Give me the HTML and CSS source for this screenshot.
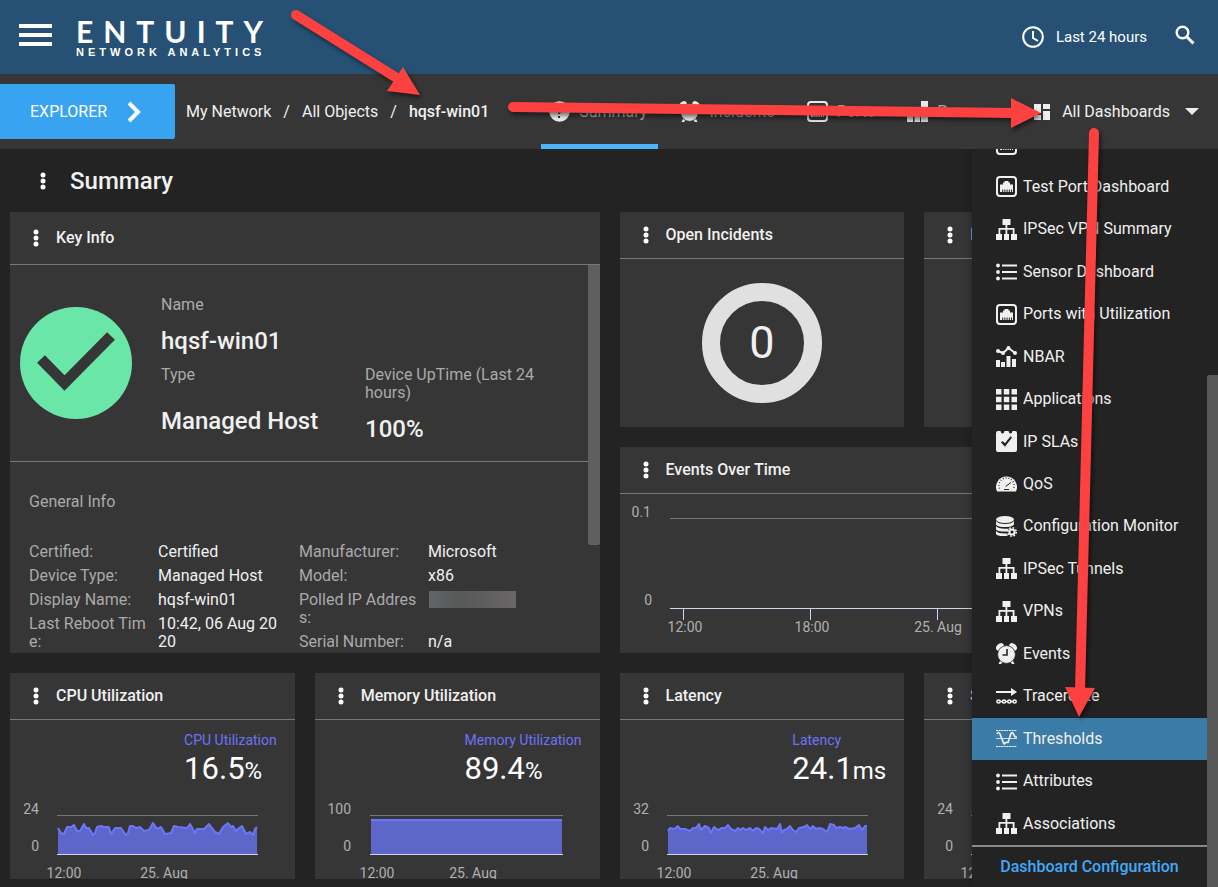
FILE: index.html
```html
<!DOCTYPE html>
<html lang="en">

<head>
    <meta charset="UTF-8">
    <meta name="viewport" content="width=device-width, initial-scale=1">
    <title>hqsf-win01 - Summary</title>
    <link rel="stylesheet" href="styles.css">
</head>

<body>
    <!-- icon sprite -->
    <svg class="sprite" aria-hidden="true">
        <symbol id="kebab" viewBox="0 0 6 18">
            <circle cx="3" cy="3" r="2.500" />
            <circle cx="3" cy="9" r="2.500" />
            <circle cx="3" cy="15" r="2.500" />
        </symbol>
        <symbol id="port" viewBox="0 0 21 21">
            <rect x="1" y="1" width="19" height="19" rx="3" fill="none" stroke="currentColor" stroke-width="2" />
            <path d="M4 16V8.500h3V6.500h1.500V5h4v1.500H14v2h3V16h-1v-2.500h-1V16h-1.200v-2.500h-1V16h-1.200v-2.500h-1V16H9.400v-2.500h-1V16H7.200v-2.500h-1V16z" />
        </symbol>
        <symbol id="tree" viewBox="0 0 21 21">
            <path d="M6.500 0h8v6h-3.200v3h7.200v6H21v6h-6v-6h1.700v-4.200h-5.400V15h1.700v6H8v-6h1.500v-4.200H4.300V15H6v6H0v-6h2.500V9h7V6h-3z" />
        </symbol>
        <symbol id="list" viewBox="0 0 21 21">
            <path d="M6 3.500h15v2H6zM6 10h15v2H6zM6 16.500h15v2H6z" />
            <circle cx="2" cy="4.500" r="1.900" />
            <circle cx="2" cy="11" r="1.900" />
            <circle cx="2" cy="17.500" r="1.900" />
        </symbol>
        <symbol id="nbar" viewBox="0 0 21 21">
            <path d="M0 14h4v7H0zM5 16h4v5H5zM10.500 10h4v11h-4zM16 13h4v8h-4z" />
            <path d="M2 5l5 2 5.500-5L19 7" fill="none" stroke="currentColor" stroke-width="2" />
            <circle cx="2" cy="5" r="2" />
            <circle cx="7" cy="7" r="2" />
            <circle cx="12.500" cy="2" r="2" />
            <circle cx="19" cy="7" r="2" />
        </symbol>
        <symbol id="apps" viewBox="0 0 21 21">
            <path d="M0 0h5.500v5.500H0zM7.800 0h5.500v5.500H7.800zM15.500 0H21v5.500h-5.500zM0 7.800h5.500v5.500H0zM7.800 7.800h5.500v5.500H7.800zM15.500 7.800H21v5.500h-5.500zM0 15.500h5.500V21H0zM7.800 15.500h5.500V21H7.800zM15.500 15.500H21V21h-5.500z" />
        </symbol>
        <symbol id="sla" viewBox="0 0 21 21">
            <path fill-rule="evenodd" d="M2 0h2.500q.5 2.600 2 2.600T8.500 0h4q.5 2.600 2 2.600T16.500 0H19q2 0 2 2v17q0 2-2 2H2q-2 0-2-2V2q0-2 2-2zM5 11.500l4 4.200L16 6.500 14.500 5.200 9 12.300 6.500 9.900z" />
        </symbol>
        <symbol id="gauge" viewBox="0 0 21 21">
            <path d="M1 18.500A10.500 10.500 0 1 1 20 18.500z" />
            <g fill="none" stroke="#232323">
                <path d="M3.500 15.500a7.600 7.600 0 1 1 14 0" stroke-width="1.400" stroke-dasharray=".8 2" />
                <path d="M9.500 13.500l5.500-4M8 16.500h5" stroke-width="1" />
            </g>
        </symbol>
        <symbol id="database" viewBox="0 0 21 21">
            <ellipse cx="9" cy="3.500" rx="9" ry="3.500" />
            <path d="M0 5q2 3 9 3t9-3v3.500q-2 2.600-9 2.600T0 8.500zM0 10q2 2.800 9 2.800 3.500 0 5-.5-2 1-2.500 3.200Q2 16 0 13.500zM0 15q2 2.500 9 2.500h2q.3 1.500 1 2.200Q2 21 0 18z" />
            <circle cx="16" cy="16" r="2.600" fill="none" stroke="currentColor" stroke-width="2" />
            <circle cx="16" cy="16" r="4.200" fill="none" stroke="currentColor" stroke-width="1.600" stroke-dasharray="1.700 1.600" />
        </symbol>
        <symbol id="alarm" viewBox="0 0 21 21">
            <ellipse cx="4" cy="4" rx="4.300" ry="3.200" transform="rotate(-42 4 4)" />
            <ellipse cx="17" cy="4" rx="4.300" ry="3.200" transform="rotate(42 17 4)" />
            <path d="M4.500 17l2.500 2-2 2H2.500zM16.500 17L14 19l2 2h2.500z" />
            <circle cx="10.500" cy="11.500" r="8.900" stroke="#232323" stroke-width=".8" />
            <path d="M11 6v6H6.500" fill="none" stroke="#232323" stroke-width="1.600" />
        </symbol>
        <symbol id="trace" viewBox="0 0 21 21">
            <path d="M0 5h15V2l6 4-6 4V7H0z" />
            <g fill="none" stroke="currentColor" stroke-width="1.600">
                <path d="M4 15.500h2M10 15.500h2M15 15.500h2" />
                <ellipse cx="2.500" cy="15.500" rx="1.600" ry="1.500" />
                <ellipse cx="8" cy="15.500" rx="1.600" ry="1.500" />
                <ellipse cx="13.300" cy="15.500" rx="1.600" ry="1.500" />
                <ellipse cx="18.600" cy="15.500" rx="1.600" ry="1.500" />
            </g>
        </symbol>
        <symbol id="threshold" viewBox="0 0 21 21">
            <g fill="none" stroke="currentColor">
                <path d="M0 2.500h21M0 18.500h21" stroke-dasharray="2 .6" />
                <path d="M0 10.500h21" stroke-width=".8" />
                <path d="M1 6q1.500-3 3 0l3.500 9q1 2 2-.5h2.500L15 5.500q1.500-2 2.500.5l1.500 3H21" stroke-width="1.700" />
            </g>
        </symbol>
        <symbol id="info" viewBox="0 0 21 21">
            <circle cx="10.500" cy="10.500" r="10.300" />
            <path d="M7.500 7q0-2.500 3-2.500t3 2.500q0 1.500-1.800 3t-1.700 3M9 16h2" fill="none" stroke="#363636" stroke-width="2" />
        </symbol>
        <symbol id="process" viewBox="0 0 21 21">
            <path d="M14 0h7v9h-7zM0 12h6v9H0zM7.500 9H13v12H7.500zM14 11h7v10h-7z" />
        </symbol>
    </svg>

    <header class="topbar">
        <button class="iconButton menuButton" aria-label="Menu">
            <svg width="34" height="24">
                <path d="M0 3h33M0 12h33M0 21h33" stroke="#fff" stroke-width="4" />
            </svg>
        </button>
        <a class="logo" href="#">
            <span class="logoName">ENTUITY</span>
            <span class="logoTag">NETWORK ANALYTICS</span>
        </a>
        <button class="timeButton">
            <svg width="22" height="22" fill="none" stroke="#fff" stroke-width="2">
                <circle cx="11" cy="11" r="9.800" />
                <path d="M11 5v7l5 3" />
            </svg>
            Last 24 hours
        </button>
        <button class="iconButton searchButton" aria-label="Search">
            <svg width="20" height="20" fill="none" stroke="#fff">
                <circle cx="7.500" cy="7.500" r="5.800" stroke-width="2.400" />
                <path d="M11.500 11.500l7 7" stroke-width="3" />
            </svg>
        </button>
    </header>

    <div class="navbar">
        <button class="explorer">
            EXPLORER
            <svg width="14" height="22">
                <path d="M2 2l9 9-9 9" fill="none" stroke="#fff" stroke-width="4" />
            </svg>
        </button>
        <nav class="breadcrumb">
            <a href="#">My Network</a>
            <span>/</span>
            <a href="#">All Objects</a>
            <span>/</span>
            <a class="current" href="#">hqsf-win01</a>
        </nav>
        <nav class="tabs">
            <a class="tab active" href="#"><svg class="icon"><use href="#info" /></svg>Summary</a>
            <a class="tab" href="#"><svg class="icon"><use href="#alarm" /></svg>Incidents</a>
            <a class="tab" href="#"><svg class="icon"><use href="#port" /></svg>Ports</a>
            <a class="tab" href="#"><svg class="icon"><use href="#process" /></svg>Processes</a>
        </nav>
        <button class="allDashboards">
            <svg width="16" height="16" fill="#eee">
                <path d="M0 0h7v9H0zM9 0h7v5H9zM0 11h7v5H0zM9 7h7v9H9z" />
            </svg>
            All Dashboards
            <svg class="caret" width="14" height="7" fill="#eee">
                <path d="M0 0h14L7 7z" />
            </svg>
        </button>
    </div>

    <main>
        <div class="pageTitle">
            <button class="kebab" aria-label="Dashboard options"><svg><use href="#kebab" /></svg></button>
            <h1>Summary</h1>
        </div>

        <div class="dashboard">
            <section class="card keyInfo">
                <div class="cardHeader">
                    <button class="kebab" aria-label="Options"><svg><use href="#kebab" /></svg></button>
                    <h2>Key Info</h2>
                </div>
                <div class="keyBody">
                    <div class="keyContent">
                        <div class="device">
                            <svg class="status" viewBox="0 0 112 112">
                                <circle cx="56" cy="56" r="56" fill="#6ae6a9" />
                                <path d="M21 52l23.500 24L91 29" fill="none" stroke="#363636" stroke-width="11" />
                            </svg>
                            <dl class="deviceFacts">
                                <div class="wide">
                                    <dt>Name</dt>
                                    <dd>hqsf-win01</dd>
                                </div>
                                <div class="type">
                                    <dt>Type</dt>
                                    <dd>Managed Host</dd>
                                </div>
                                <div>
                                    <dt>Device UpTime (Last 24 hours)</dt>
                                    <dd>100%</dd>
                                </div>
                            </dl>
                        </div>
                        <div class="general">
                            <h3>General Info</h3>
                            <div class="generalColumns">
                                <dl>
                                    <dt>Certified:</dt>
                                    <dd>Certified</dd>
                                    <dt>Device Type:</dt>
                                    <dd>Managed Host</dd>
                                    <dt>Display Name:</dt>
                                    <dd>hqsf-win01</dd>
                                    <dt>Last Reboot Time:</dt>
                                    <dd>10:42, 06 Aug 2020</dd>
                                </dl>
                                <dl>
                                    <dt>Manufacturer:</dt>
                                    <dd>Microsoft</dd>
                                    <dt>Model:</dt>
                                    <dd>x86</dd>
                                    <dt>Polled IP Address:</dt>
                                    <dd><span class="masked"></span></dd>
                                    <dt>Serial Number:</dt>
                                    <dd>n/a</dd>
                                </dl>
                            </div>
                        </div>
                    </div>
                    <div class="cardScroll"></div>
                </div>
            </section>

            <section class="card">
                <div class="cardHeader">
                    <button class="kebab" aria-label="Options"><svg><use href="#kebab" /></svg></button>
                    <h2>Open Incidents</h2>
                </div>
                <div class="donut"><span>0</span></div>
            </section>

            <section class="card">
                <div class="cardHeader">
                    <button class="kebab" aria-label="Options"><svg><use href="#kebab" /></svg></button>
                    <h2>Incidents</h2>
                </div>
            </section>

            <section class="card events">
                <div class="cardHeader">
                    <button class="kebab" aria-label="Options"><svg><use href="#kebab" /></svg></button>
                    <h2>Events Over Time</h2>
                </div>
                <svg class="eventsChart">
                    <path d="M50 24.500H580" stroke="#777" />
                    <path d="M50 114.500H580M63.500 115v11M190.500 115v11M317.500 115v11M444.500 115v11" stroke="#ccd6eb" />
                    <text x="31" y="23" text-anchor="end">0.1</text>
                    <text x="32" y="111" text-anchor="end">0</text>
                    <text x="65" y="138" text-anchor="middle">12:00</text>
                    <text x="192" y="138" text-anchor="middle">18:00</text>
                    <text x="318" y="138" text-anchor="middle">25. Aug</text>
                </svg>
            </section>

            <section class="card">
                <div class="cardHeader">
                    <button class="kebab" aria-label="Options"><svg><use href="#kebab" /></svg></button>
                    <h2>CPU Utilization</h2>
                </div>
                <div class="metric">
                    <div>
                        <div class="metricName">CPU Utilization</div>
                        <div class="metricValue">16.5<small>%</small></div>
                    </div>
                </div>
                <svg class="sparkline">
                    <path d="M47 16.500H248" stroke="#777" />
                    <path class="area" d="M48 55V29L51 34 54 35 57 28 61 28 64 26 67 32 70 32 74 25 76 29 79 29 83 36 85 34 87 28 91 27 94 28 99 28 101 35 105 29 109 29 111 29 116 36 118 34 120 27 123 27 126 29 130 28 134 32 139 31 143 24 147 30 151 28 155 35 161 34 164 27 168 28 177 29 180 25 185 34 187 30 194 30 199 25 205 33 209 35 213 28 218 24 221 28 223 27 226 32 229 29 232 27 236 35 240 33 243 36 245 30 247 28V55z" />
                    <path class="line" d="M48 29L51 34 54 35 57 28 61 28 64 26 67 32 70 32 74 25 76 29 79 29 83 36 85 34 87 28 91 27 94 28 99 28 101 35 105 29 109 29 111 29 116 36 118 34 120 27 123 27 126 29 130 28 134 32 139 31 143 24 147 30 151 28 155 35 161 34 164 27 168 28 177 29 180 25 185 34 187 30 194 30 199 25 205 33 209 35 213 28 218 24 221 28 223 27 226 32 229 29 232 27 236 35 240 33 243 36 245 30 247 28" />
                    <path d="M47 55.500H248" stroke="#ccd6eb" />
                    <text x="29" y="15" text-anchor="end">24</text>
                    <text x="29" y="52" text-anchor="end">0</text>
                    <text x="54" y="79" text-anchor="middle">12:00</text>
                    <text x="154" y="79" text-anchor="middle">25. Aug</text>
                </svg>
            </section>

            <section class="card">
                <div class="cardHeader">
                    <button class="kebab" aria-label="Options"><svg><use href="#kebab" /></svg></button>
                    <h2>Memory Utilization</h2>
                </div>
                <div class="metric">
                    <div>
                        <div class="metricName">Memory Utilization</div>
                        <div class="metricValue">89.4<small>%</small></div>
                    </div>
                </div>
                <svg class="sparkline">
                    <path d="M55 16.500H248" stroke="#777" />
                    <path class="area" d="M56 55V21H247V55z" />
                    <path class="line" d="M56 21H247" />
                    <path d="M55 55.500H248" stroke="#ccd6eb" />
                    <text x="36" y="15" text-anchor="end">100</text>
                    <text x="36" y="52" text-anchor="end">0</text>
                    <text x="62" y="79" text-anchor="middle">12:00</text>
                    <text x="158" y="79" text-anchor="middle">25. Aug</text>
                </svg>
            </section>

            <section class="card">
                <div class="cardHeader">
                    <button class="kebab" aria-label="Options"><svg><use href="#kebab" /></svg></button>
                    <h2>Latency</h2>
                </div>
                <div class="metric">
                    <div>
                        <div class="metricName">Latency</div>
                        <div class="metricValue">24.1<small>ms</small></div>
                    </div>
                </div>
                <svg class="sparkline">
                    <path d="M47 16.500H248" stroke="#777" />
                    <path class="area" d="M48 55V32L50 29 54 30 58 27 60 30 65 30 70 32 73 29 76 29 79 25 81 31 85 27 89 29 91 34 94 28 98 31 102 29 105 29 108 26 111 30 115 32 118 29 120 31 123 29 126 31 130 29 133 32 136 29 139 30 143 34 145 28 148 31 151 29 157 30 160 25 162 34 164 31 167 30 170 27 173 31 176 33 179 29 184 28 187 26 190 30 193 27 196 30 199 29 203 30 207 33 210 25 214 26 216 29 220 28 223 29 225 28 230 30 235 29 239 26 242 31 245 27 247 27V55z" />
                    <path class="line" d="M48 32L50 29 54 30 58 27 60 30 65 30 70 32 73 29 76 29 79 25 81 31 85 27 89 29 91 34 94 28 98 31 102 29 105 29 108 26 111 30 115 32 118 29 120 31 123 29 126 31 130 29 133 32 136 29 139 30 143 34 145 28 148 31 151 29 157 30 160 25 162 34 164 31 167 30 170 27 173 31 176 33 179 29 184 28 187 26 190 30 193 27 196 30 199 29 203 30 207 33 210 25 214 26 216 29 220 28 223 29 225 28 230 30 235 29 239 26 242 31 245 27 247 27" />
                    <path d="M47 55.500H248" stroke="#ccd6eb" />
                    <text x="29" y="15" text-anchor="end">32</text>
                    <text x="29" y="52" text-anchor="end">0</text>
                    <text x="54" y="79" text-anchor="middle">12:00</text>
                    <text x="154" y="79" text-anchor="middle">25. Aug</text>
                </svg>
            </section>

            <section class="card">
                <div class="cardHeader">
                    <button class="kebab" aria-label="Options"><svg><use href="#kebab" /></svg></button>
                    <h2>Storage</h2>
                </div>
                <svg class="sparkline">
                    <path d="M47 16.500H248" stroke="#777" />
                    <path d="M47 55.500H248" stroke="#ccd6eb" />
                    <text x="29" y="15" text-anchor="end">24</text>
                    <text x="29" y="52" text-anchor="end">0</text>
                    <text x="54" y="79" text-anchor="middle">12:00</text>
                </svg>
            </section>
        </div>

        <aside class="menu">
            <div class="menuPanel">
                <div class="menuClip">
                    <ul>
                        <li><a href="#" aria-label="Port Dashboard"><svg class="icon"><use href="#port" /></svg></a></li>
                        <li><a href="#"><svg class="icon"><use href="#port" /></svg>Test Port Dashboard</a></li>
                        <li><a href="#"><svg class="icon"><use href="#tree" /></svg>IPSec VPN Summary</a></li>
                        <li><a href="#"><svg class="icon"><use href="#list" /></svg>Sensor Dashboard</a></li>
                        <li><a href="#"><svg class="icon"><use href="#port" /></svg>Ports with Utilization</a></li>
                        <li><a href="#"><svg class="icon"><use href="#nbar" /></svg>NBAR</a></li>
                        <li><a href="#"><svg class="icon"><use href="#apps" /></svg>Applications</a></li>
                        <li><a href="#"><svg class="icon"><use href="#sla" /></svg>IP SLAs</a></li>
                        <li><a href="#"><svg class="icon"><use href="#gauge" /></svg>QoS</a></li>
                        <li><a href="#"><svg class="icon"><use href="#database" /></svg>Configuration Monitor</a></li>
                        <li><a href="#"><svg class="icon"><use href="#tree" /></svg>IPSec Tunnels</a></li>
                        <li><a href="#"><svg class="icon"><use href="#tree" /></svg>VPNs</a></li>
                        <li><a href="#"><svg class="icon"><use href="#alarm" /></svg>Events</a></li>
                        <li><a href="#"><svg class="icon"><use href="#trace" /></svg>Traceroute</a></li>
                        <li class="selected"><a href="#"><svg class="icon"><use href="#threshold" /></svg>Thresholds</a></li>
                        <li><a href="#"><svg class="icon"><use href="#list" /></svg>Attributes</a></li>
                        <li><a href="#"><svg class="icon"><use href="#tree" /></svg>Associations</a></li>
                    </ul>
                </div>
                <a class="menuFooter" href="#">Dashboard Configuration</a>
            </div>
            <div class="menuScroll"></div>
        </aside>
    </main>

    <!-- walkthrough arrows -->
    <svg class="arrows" aria-hidden="true">
        <g><path class="shaft" d="M296 15L400 80" /><path d="M420 95L403 67 387 91z" /></g>
        <g><path class="shaft" d="M513 107L1014 113" /><path d="M1041 113L1011 98V128z" /></g>
        <g><path class="shaft" d="M1094 133L1080 692" /><path d="M1079 717L1065 687 1095 688z" /></g>
    </svg>
</body>

</html>
```
FILE: styles.css
```css
* {
    box-sizing: border-box;
}

body {
    margin: 0;
    height: 100vh;
    overflow: hidden;
    display: flex;
    flex-direction: column;
    position: relative;
    background: #232323;
    color: #f0f0f0;
    font-family: Roboto, "Liberation Sans", sans-serif;
    font-size: 16px;
    line-height: 18px;
}

h1,
h2,
h3,
dl,
dd,
ul {
    margin: 0;
    padding: 0;
}

button {
    border: 0;
    padding: 0;
    background: none;
    color: inherit;
    font: inherit;
    cursor: pointer;
}

a {
    color: inherit;
    text-decoration: none;
}

svg {
    display: block;
    flex: none;
}

.sprite {
    position: absolute;
    width: 0;
    height: 0;
}

.icon {
    width: 21px;
    height: 21px;
    fill: currentColor;
}

/* top bar */
.topbar {
    height: 74px;
    flex: none;
    display: flex;
    align-items: center;
    padding: 0 23px 0 19px;
    background: #265175;
    color: #fff;
}

.menuButton {
    margin-bottom: 5px;
}

.logo {
    display: flex;
    flex-direction: column;
    margin: 0 auto 0 23px;
    font-weight: bold;
    white-space: nowrap;
}

.logoName {
    font-family: Lato, sans-serif;
    font-size: 30px;
    line-height: 30px;
    letter-spacing: 10px;
}

.logoTag {
    font-family: "Liberation Sans", sans-serif;
    font-size: 11px;
    line-height: 12px;
    letter-spacing: 4px;
}

.timeButton {
    display: flex;
    align-items: center;
    gap: 12px;
    font-size: 15px;
}

.searchButton {
    margin: 0 0 4px 28px;
}

/* navigation bar */
.navbar {
    height: 75px;
    flex: none;
    display: flex;
    align-items: center;
    background: #363636;
}

.explorer {
    width: 175px;
    height: 55px;
    display: flex;
    align-items: center;
    gap: 20px;
    padding-left: 30px;
    background: #38a3f1;
    border-radius: 0 2px 2px 0;
    color: #fff;
}

.breadcrumb {
    display: flex;
    gap: 12px;
    margin-left: 11px;
    white-space: nowrap;
}

.current {
    font-weight: 500;
}

.tabs {
    align-self: stretch;
    display: flex;
    gap: 13px;
    margin-left: 52px;
}

.tab {
    display: flex;
    align-items: center;
    gap: 9px;
    padding: 5px 11px 0 8px;
    border-bottom: 5px solid transparent;
    color: #aaa;
}

.tab .icon {
    color: #e8e8e8;
}

.tab.active {
    border-bottom-color: #4fb3fb;
}

.allDashboards {
    display: flex;
    align-items: center;
    gap: 12px;
    margin: 0 19px 0 auto;
    white-space: nowrap;
}

.caret {
    margin-left: 3px;
}

/* dashboard */
main {
    flex: 1;
    min-height: 0;
    position: relative;
    overflow: hidden;
}

.pageTitle {
    height: 63px;
    display: flex;
    align-items: center;
    gap: 24px;
    padding-left: 40px;
}

h1 {
    font-size: 24px;
    font-weight: 500;
    line-height: 28px;
}

.kebab svg {
    width: 6px;
    height: 18px;
    fill: #fff;
}

.dashboard {
    display: grid;
    grid-template-columns: repeat(4, 1fr);
    grid-template-rows: 215px 206px 206px;
    gap: 20px;
    padding: 0 9px 0 10px;
}

.card {
    min-width: 0;
    display: flex;
    flex-direction: column;
    overflow: hidden;
    background: #363636;
}

.cardHeader {
    height: 47px;
    flex: none;
    display: flex;
    align-items: center;
    gap: 17px;
    padding: 0 23px;
    border-bottom: 1px solid #777;
}

h2 {
    font-size: 16px;
    font-weight: 500;
    line-height: 18px;
    white-space: nowrap;
}

.keyInfo {
    grid-column: span 2;
    grid-row: span 2;
}

.keyInfo .cardHeader {
    height: 53px;
}

.keyBody {
    flex: 1;
    min-height: 0;
    display: flex;
}

.keyContent {
    flex: 1;
    min-width: 0;
    overflow: hidden;
}

.cardScroll {
    width: 12px;
    height: 280px;
    background: #5f5f5f;
    border-radius: 0 0 2px 2px;
}

.device {
    display: flex;
    align-items: center;
    gap: 29px;
    height: 197px;
    padding: 0 10px;
    border-bottom: 1px solid #777;
}

.status {
    width: 112px;
    height: 112px;
}

dt,
h3 {
    color: #aaa;
    font-size: 16px;
    font-weight: 400;
}

.deviceFacts {
    flex: 1;
    display: grid;
    grid-template-columns: 184px 184px;
    gap: 11px 20px;
    padding-top: 12px;
}

.deviceFacts dd {
    margin-top: 13px;
    font-size: 24px;
    font-weight: 500;
    line-height: 28px;
}

.deviceFacts .wide {
    grid-column: span 2;
}

.deviceFacts .type {
    display: flex;
    flex-direction: column;
    justify-content: space-between;
    padding-bottom: 8px;
}

.general {
    padding: 31px 19px 0;
}

.generalColumns {
    display: grid;
    grid-template-columns: 250px 250px;
    align-items: start;
    gap: 20px;
    margin-top: 32px;
}

.generalColumns dl {
    display: grid;
    grid-template-columns: 120px 121px;
    gap: 6px 9px;
    word-break: break-all;
}

.masked {
    display: block;
    width: 87px;
    height: 17px;
    margin-left: 1px;
    background: linear-gradient(to right, #626468, #575858 35%, #696667);
}

.donut {
    width: 120px;
    height: 120px;
    margin: auto;
    display: flex;
    align-items: center;
    justify-content: center;
    border: 18px solid #e0e0e0;
    border-radius: 50%;
    font-size: 45px;
    line-height: 48px;
}

.events {
    grid-column: 3 / span 2;
}

.eventsChart {
    width: 100%;
    height: 159px;
}

.eventsChart text,
.sparkline text {
    fill: #b0b0b0;
    font-size: 14px;
}

.metric {
    display: flex;
    justify-content: flex-end;
    padding: 11px 18px 0;
}

.metricName {
    color: #6b74f8;
    font-size: 14px;
}

.metricValue {
    font-size: 31px;
    line-height: 40px;
    color: #fff;
}

.metricValue small {
    font-size: 24px;
}

.sparkline {
    width: 100%;
    height: 80px;
    margin-top: auto;
}

.area {
    fill: #5d67c9;
}

.line {
    fill: none;
    stroke: #6c76fb;
    stroke-width: 2;
    stroke-linejoin: round;
}

/* dashboards drop-down, lies over the cards */
.menu {
    position: absolute;
    top: 0;
    right: 0;
    bottom: 0;
    width: 246px;
    display: flex;
    background: #232323;
    box-shadow: 0 0 10px rgba(0, 0, 0, 0.3);
}

.menuPanel {
    flex: 1;
    display: flex;
    flex-direction: column;
}

.menuClip {
    flex: 1;
    min-height: 0;
    display: flex;
    overflow: hidden;
}

.menu ul {
    flex: 1;
    display: flex;
    flex-direction: column;
    margin-top: -26px;
    list-style: none;
}

.menu li {
    flex: 1;
    display: flex;
}

.menu li a {
    flex: 1;
    display: flex;
    align-items: center;
    gap: 6px;
    padding-left: 24px;
    white-space: nowrap;
}

.menu .selected {
    background: #3a7ba8;
}

.menuFooter {
    height: 42px;
    display: flex;
    align-items: center;
    justify-content: center;
    border-top: 2px solid #888;
    color: #42a9f8;
    font-weight: 500;
}

.menuScroll {
    width: 11px;
    margin-top: 226px;
    background: #575757;
    border-radius: 2px 0 0 0;
}

/* arrows, lie over the whole page */
.arrows {
    position: absolute;
    top: 0;
    left: 0;
    width: 100%;
    height: 100%;
    fill: #fd4141;
    pointer-events: none;
}

.arrows g {
    filter: drop-shadow(2px 3px 2px rgba(0, 0, 0, 0.5));
}

.shaft {
    fill: none;
    stroke: #fd4141;
    stroke-width: 10;
    stroke-linecap: round;
}
```
